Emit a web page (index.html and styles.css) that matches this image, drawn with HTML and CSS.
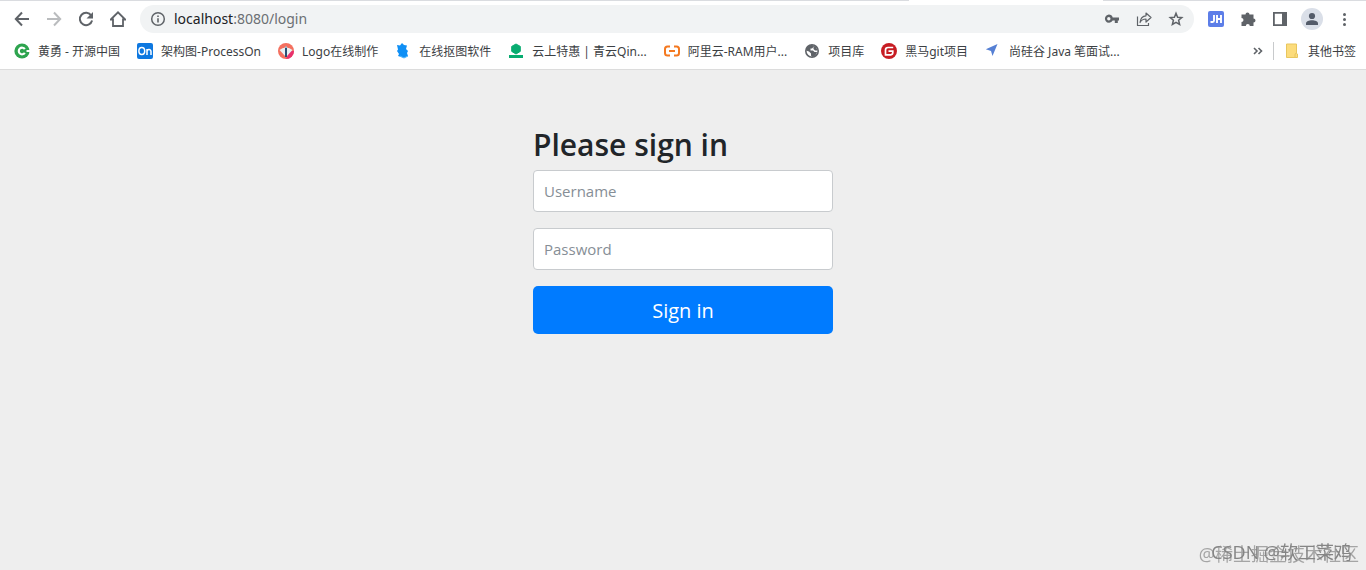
FILE: index.html
```html
<!DOCTYPE html>
<html lang="zh-CN">
<head>
<meta charset="utf-8">
<meta name="viewport" content="width=device-width, initial-scale=1">
<title>Please sign in</title>
<link rel="stylesheet" href="styles.css">
</head>
<body>
<header class="browser">
  <div class="tab-edge"><span class="tab-active"></span></div>
  <div class="toolbar">
    <nav class="nav-buttons" aria-label="Navigation">
      <button class="icon-btn" aria-label="Back"><svg viewBox="0 0 16 16"><path d="M15 8H2M8 1.5 1.8 8 8 14.500" fill="none" stroke="#5f6368" stroke-width="2"/></svg></button>
      <button class="icon-btn" aria-label="Forward"><svg viewBox="0 0 16 16"><path d="M1 8h13M8 1.500 14.200 8 8 14.500" fill="none" stroke="#babcbe" stroke-width="2"/></svg></button>
      <button class="icon-btn" aria-label="Reload"><svg viewBox="0 0 16 16"><path d="M13.300 4.600A6.200 6.200 0 1 0 14.100 9.500" fill="none" stroke="#5f6368" stroke-width="2"/><path d="M15 1v6.500H8.500z" fill="#5f6368"/></svg></button>
      <button class="icon-btn" aria-label="Home"><svg viewBox="0 0 16 16"><path d="M.8 8.500 8 1.300l7.200 7.200H13V15H3V8.500z" fill="none" stroke="#5f6368" stroke-width="1.800"/></svg></button>
    </nav>
    <div class="omnibox">
      <svg class="icon" viewBox="0 0 16 16"><circle cx="8" cy="8" r="6.300" fill="none" stroke="#5f6368" stroke-width="1.500"/><path d="M7.200 7.200h1.600v4.300H7.200zM7.200 4.400h1.600V6H7.200z" fill="#5f6368"/></svg>
      <span class="url"><span class="host">localhost</span>:8080/login</span>
      <div class="omni-actions">
        <button class="icon-btn" aria-label="Passwords"><svg viewBox="0 0 16 16"><path fill-rule="evenodd" d="M4.800 3.600a4.100 4.100 0 0 1 3.900 2.800H15v3.200h-1.200V12h-3V9.600H8.700A4.100 4.100 0 1 1 4.800 3.600zm0 2.500a1.700 1.700 0 1 0 0 3.400 1.700 1.700 0 0 0 0-3.400z" fill="#5f6368"/></svg></button>
        <button class="icon-btn" aria-label="Share"><svg viewBox="0 0 16 16"><path d="M1.500 5.500v9h11v-2.500M4 11.500C4.500 7 7 5 10 4.800V2l5 4.500-5 4.500V8C7 8 5.200 9.200 4 11.500z" fill="none" stroke="#5f6368" stroke-width="1.200" stroke-linejoin="round"/></svg></button>
        <button class="icon-btn" aria-label="Bookmark"><svg viewBox="0 0 16 16"><path d="M8 2.300l1.600 3.900 4.200.3-3.200 2.800 1 4.100L8 11.300l-3.600 2.100 1-4.100-3.200-2.800 4.200-.3z" fill="none" stroke="#5f6368" stroke-width="1.500"/></svg></button>
      </div>
    </div>
    <div class="extensions">
      <button class="icon-btn" aria-label="JH"><svg viewBox="0 0 16 16"><rect width="16" height="16" rx="2" fill="#5d7ee8"/><path d="M6 4v5.500q0 1.500-1.400 1.500H2.500M9 4v8M13 4v8M9 8h4" fill="none" stroke="#fff" stroke-width="1.900"/></svg></button>
      <button class="icon-btn" aria-label="Extensions"><svg viewBox="0 0 16 16"><path d="M1.500 3.500h4a2 2 0 1 1 4 0h4v4a2 2 0 1 1 0 4V15H9.800a2 2 0 0 0-4 0H1.500v-4a2 2 0 0 0 0-4z" fill="#5f6368"/></svg></button>
      <button class="icon-btn" aria-label="Side panel"><svg viewBox="0 0 16 16"><path fill-rule="evenodd" d="M1 1h14v14H1zM2.800 2.800v10.400H10V2.800z" fill="#5f6368"/></svg></button>
      <button class="icon-btn avatar" aria-label="Profile"><svg viewBox="0 0 16 16"><circle cx="8" cy="5" r="3.100" fill="#535b69"/><path d="M2 14v-1.500C2 10.300 5 9.300 8 9.300s6 1 6 3.200V14z" fill="#535b69"/></svg></button>
      <button class="icon-btn" aria-label="Menu"><svg viewBox="0 0 16 16"><circle cx="8.500" cy="3.500" r="1.500" fill="#5f6368"/><circle cx="8.500" cy="8.500" r="1.500" fill="#5f6368"/><circle cx="8.500" cy="13.500" r="1.500" fill="#5f6368"/></svg></button>
    </div>
  </div>
  <nav class="bookmarks" aria-label="Bookmarks">
    <a class="bookmark" href="#"><svg class="icon" viewBox="0 0 16 16"><circle cx="8" cy="8" r="7.600" fill="#2ea44f"/><path d="M10.800 6.100A3.300 3.300 0 1 0 10.800 9.900" fill="none" stroke="#fff" stroke-width="2.200"/><path d="M12.500 7H16v2h-3.500z" fill="#fff"/></svg><span>黄勇 - 开源中国</span></a>
    <a class="bookmark" href="#"><svg class="icon" viewBox="0 0 16 16"><rect width="16" height="16" rx="2" fill="#0e78e0"/><ellipse cx="4.800" cy="8" rx="2.900" ry="3.500" fill="none" stroke="#fff" stroke-width="1.500"/><path d="M10 12V6M10 8.500c0-2.400 4-2.800 4 0V12" fill="none" stroke="#fff" stroke-width="1.500"/></svg><span>架构图-ProcessOn</span></a>
    <a class="bookmark" href="#"><svg class="icon" viewBox="0 0 16 16"><circle cx="8" cy="8" r="8" fill="#f4705f"/><path d="M8 16a8 8 0 0 0 8-8h-4z" fill="#e8316d"/><path d="M1.500 7 5 5h6l3.500 2L8 14z" fill="#e9f0f2"/><path d="M7 3.500h2V14H7z" fill="#294f73"/><path d="m5.500 6.500 2.500-3 2.500 3" fill="none" stroke="#e9f0f2" stroke-width="1"/></svg><span>Logo在线制作</span></a>
    <a class="bookmark" href="#"><svg class="icon" viewBox="0 0 16 16"><path d="m2 2 3 .5L7 0l2 2 3 .5L11 6l2 2-1 2 1 3-4 2-3-1-3-1 1-2-2-3 1-1.500z" fill="#0f8ff5"/><path d="m5 13 4 2 4-2" fill="none" stroke="#55b8ff" stroke-width="1"/></svg><span>在线抠图软件</span></a>
    <a class="bookmark" href="#"><svg class="icon" viewBox="0 0 16 16"><path d="m8 1 4.300 2.400v5L8 11 3.700 8.400v-5z" fill="#08ac70" stroke="#08ac70" stroke-linejoin="round"/><path d="M1 12h14v3H1z" fill="#08ac70"/></svg><span>云上特惠 | 青云Qin...</span></a>
    <a class="bookmark" href="#"><svg class="icon" viewBox="0 0 16 16"><path d="M6 3.500H3.500Q1 3.500 1 6v4q0 2.500 2.500 2.500H6M10 3.500h2.500Q15 3.500 15 6v4q0 2.500-2.500 2.500H10M5 8h6" fill="none" stroke="#f47920" stroke-width="2"/></svg><span>阿里云-RAM用户...</span></a>
    <a class="bookmark" href="#"><svg class="icon" viewBox="0 0 16 16"><circle cx="8" cy="8" r="6.200" fill="#fff" stroke="#5f6368" stroke-width="1.600"/><path d="M2 7.500C2.500 4 5 2 8.500 2L10 3.500 8 5.500H6.500v2H9l1.500 1.500H13C12.500 12 10.500 13.500 8 14l-1-1.500V10.500L5 8.500z" fill="#5f6368"/><path d="M9.500 2.500 12 4l1.500 3.500H11L9.500 6z" fill="#5f6368"/></svg><span>项目库</span></a>
    <a class="bookmark" href="#"><svg class="icon" viewBox="0 0 16 16"><circle cx="8" cy="8" r="8" fill="#c71d23"/><path d="M12.200 4.500H7Q4.500 4.500 4.500 7v4.800h5.300q2-.2 2-2.200V8.200H7.500" fill="none" stroke="#fff" stroke-width="1.700"/></svg><span>黑马git项目</span></a>
    <a class="bookmark" href="#"><svg class="icon" viewBox="0 0 16 16"><path d="M12.500 1 .8 6.200 6 8l1.500 5z" fill="#5680d4"/></svg><span>尚硅谷 Java 笔面试...</span></a>
    <div class="bookmark-end">
      <button class="icon-btn overflow" aria-label="More bookmarks"><svg viewBox="0 0 16 16"><path d="m4 5 3 3-3 3M8.500 5l3 3-3 3" fill="none" stroke="#5f6368" stroke-width="1.600"/></svg></button>
      <a class="bookmark folder" href="#"><svg class="icon" viewBox="0 0 16 16"><path d="M2.500 1h10v9.500l1 .5v3.500h-11z" fill="#fcdc7c" stroke="#e8c65e"/><path d="M11 14v-3l1.500-1" fill="none" stroke="#e8c65e"/></svg><span>其他书签</span></a>
    </div>
  </nav>
</header>
<main class="page">
  <form class="signin">
    <h1 class="title">Please sign in</h1>
    <input class="field" type="text" placeholder="Username" aria-label="Username">
    <input class="field" type="password" placeholder="Password" aria-label="Password">
    <button class="submit" type="button">Sign in</button>
  </form>
</main>
<div class="watermark community">@稀土掘金技术社区</div>
<div class="watermark author">CSDN @软工菜鸡</div>
</body>
</html>
```
FILE: styles.css
```css
* { box-sizing: border-box; }
body {
  margin: 0;
  min-height: 100vh;
  background: #eee;
  color: #212529;
  font-family: "Open Sans", "Noto Sans CJK SC", sans-serif;
}
button { border: 0; padding: 0; background: none; font: inherit; }
svg { display: block; width: 16px; height: 16px; }
.browser { background: #fff; border-bottom: 1px solid #dcdcdc; font-family: "Noto Sans", "Noto Sans CJK SC", sans-serif; }
.tab-edge { display: flex; justify-content: flex-end; height: 1px; padding-right: 263px; background: #dadce0; }
.tab-active { width: 194px; background: #fff; }
.toolbar { display: flex; align-items: center; height: 36px; padding-right: 14px; }
.nav-buttons { display: flex; gap: 16px; padding: 0 14px; }
.icon-btn { display: grid; place-items: center; flex: none; width: 16px; height: 16px; }
.icon { flex: none; }
.omnibox {
  display: flex;
  align-items: center;
  gap: 8px;
  flex: 1;
  height: 28px;
  padding: 0 10px;
  border-radius: 14px;
  background: #f1f3f4;
}
.url { color: #6b6f73; font-size: 14px; line-height: 20px; }
.host { color: #202124; }
.omni-actions { display: flex; gap: 16px; margin-left: auto; }
.extensions { display: flex; align-items: center; gap: 16px; margin-left: 14px; }
.avatar { width: 22px; height: 22px; margin: 0 -3px; border-radius: 50%; background: #dadfe8; }
.bookmarks { display: flex; align-items: center; gap: 17px; height: 32px; padding: 0 10px 4px 14px; }
.bookmark {
  display: flex;
  align-items: center;
  gap: 8px;
  color: #3c4043;
  font-size: 12px;
  line-height: 16px;
  text-decoration: none;
  white-space: nowrap;
}
.bookmark span { padding-top: 2px; }
.bookmark-end { display: flex; align-items: center; gap: 7px; margin-left: auto; }
.folder { padding-left: 10px; border-left: 1px solid #c8cacc; }
.page { padding: 56px 16px; }
.signin { display: flex; flex-direction: column; width: 100%; max-width: 300px; margin: 0 auto; }
.title { margin: 0 0 6px; font-size: 30px; font-weight: 600; line-height: 38px; white-space: nowrap; }
.field {
  height: 42px;
  margin-bottom: 16px;
  padding: 0 10px;
  border: 1px solid #c8cbce;
  border-radius: 4px;
  background: #fff;
  color: #495057;
  font: 15px/24px "Open Sans", sans-serif;
}
.field::placeholder { color: #868e96; opacity: 1; }
.submit { height: 48px; padding-top: 2px; border-radius: 5px; background: #007bff; color: #fff; font-size: 20px; line-height: 28px; }
.watermark { position: fixed; white-space: nowrap; line-height: 24px; }
.community { right: 7px; bottom: 4px; color: #a5a5a5; font-size: 18px; }
.author { right: 14px; bottom: 6px; color: #858585; font-size: 18px; }
```
